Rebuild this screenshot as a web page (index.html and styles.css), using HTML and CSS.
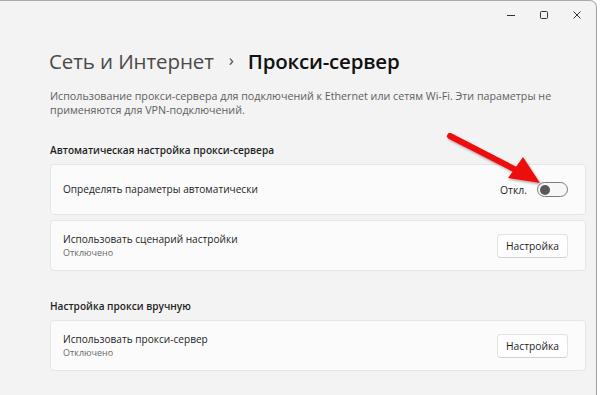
FILE: index.html
```html
<!DOCTYPE html>
<html lang="ru">
<head>
<meta charset="utf-8">
<link rel="stylesheet" href="styles.css">
</head>
<body>
<div class="window">
  <div class="titlebar">
    <span class="ctl">
      <svg width="10" height="10" viewBox="0 0 10 10"><path d="M1 5.5H9" stroke="#333" stroke-width="1"/></svg>
    </span>
    <span class="ctl">
      <svg width="10" height="10" viewBox="0 0 10 10"><rect x="1.5" y="1.5" width="7" height="7" rx="1" fill="none" stroke="#333" stroke-width="1"/></svg>
    </span>
    <span class="ctl">
      <svg width="10" height="10" viewBox="0 0 10 10"><path d="M1.5 1.5L8.5 8.5M8.5 1.5L1.5 8.5" stroke="#333" stroke-width="1"/></svg>
    </span>
  </div>
  <main class="content">
    <h1 class="crumbs"><span class="parent">Сеть и Интернет</span><span class="sep">›</span><span class="current">Прокси-сервер</span></h1>
    <p class="desc">Использование прокси-сервера для подключений к Ethernet или сетям Wi-Fi. Эти параметры не применяются для VPN-подключений.</p>

    <h2 class="section first">Автоматическая настройка прокси-сервера</h2>
    <div class="card">
      <div class="text"><div class="title">Определять параметры автоматически</div></div>
      <div class="state">Откл.</div>
      <div class="toggle"><span class="thumb"></span></div>
    </div>
    <div class="card">
      <div class="text"><div class="title">Использовать сценарий настройки</div><div class="sub">Отключено</div></div>
      <button class="btn">Настройка</button>
    </div>

    <h2 class="section">Настройка прокси вручную</h2>
    <div class="card">
      <div class="text"><div class="title">Использовать прокси-сервер</div><div class="sub">Отключено</div></div>
      <button class="btn">Настройка</button>
    </div>

    <h2 class="section faint">Связанные параметры</h2>
  </main>
  <svg class="arrow" width="120" height="80" viewBox="0 0 120 80">
    <defs>
      <filter id="sh" x="-20%" y="-20%" width="140%" height="140%">
        <feDropShadow dx="1" dy="1.5" stdDeviation="1" flood-color="#000" flood-opacity="0.35"/>
      </filter>
    </defs>
    <g filter="url(#sh)" fill="#ee1111">
      <path d="M10 15 L78 50" stroke="#ee1111" stroke-width="6" stroke-linecap="round"/>
      <polygon points="100,62 68,57 83,36"/>
    </g>
  </svg>
</div>
</body>
</html>
```
FILE: styles.css
```css
* { box-sizing: border-box; }
html, body { margin: 0; padding: 0; background: #ffffff; }
body {
  width: 600px;
  height: 395px;
  overflow: hidden;
  font-family: "Open Sans", "Noto Sans", sans-serif;
  color: #1b1b1b;
}
.window {
  position: relative;
  width: 597px;
  height: 395px;
  background: #f3f3f3;
  border-top: 1px solid #a9a9a9;
  border-right: 1px solid #a0a0a0;
  border-top-right-radius: 7px;
  overflow: hidden;
}
.titlebar {
  height: 28px;
  display: flex;
  justify-content: flex-end;
  align-items: center;
  padding-right: 3px;
}
.ctl {
  width: 33px;
  height: 28px;
  display: flex;
  align-items: center;
  justify-content: center;
}
.content {
  padding: 0 10px 0 50px;
}
.crumbs {
  margin: 17px 0 0 -1px;
  font-size: 20.5px;
  line-height: 28px;
  font-weight: 400;
  display: flex;
  align-items: center;
  letter-spacing: -0.1px;
}
.parent { color: #4a4a4a; }
.sep {
  color: #444;
  font-size: 17px;
  margin: 0 14px 2px 15px;
}
.current { color: #111; font-weight: 600; letter-spacing: -0.2px; }
.desc {
  margin: 14px 0 0;
  font-size: 10.7px;
  line-height: 13.5px;
  color: #606060;
  width: 520px;
}
.section {
  margin: 28px 0 7px;
  font-size: 10.1px;
  line-height: 14px;
  font-weight: 600;
  color: #1f1f1f;
}
.section.first { margin-top: 26px; }
.section.faint { margin-top: 23px; color: #c9c9c9; }
.card {
  display: flex;
  align-items: center;
  height: 51px;
  margin-bottom: 5px;
  padding: 0 17px 0 12px;
  background: #fbfbfb;
  border: 1px solid #e6e6e6;
  border-radius: 4px;
}
.card .text { flex: 1; }
.title {
  font-size: 10.1px;
  line-height: 13px;
  color: #1e1e1e;
}
.sub {
  font-size: 9px;
  line-height: 12px;
  color: #6a6a6a;
  margin-top: 1px;
}
.state {
  font-size: 10.4px;
  color: #1e1e1e;
  margin-right: 10px;
}
.toggle {
  width: 31px;
  height: 15px;
  border: 1px solid #7c7c7c;
  border-radius: 8px;
  background: #f7f7f7;
  display: flex;
  align-items: center;
  padding-left: 2px;
}
.thumb {
  width: 10px;
  height: 10px;
  border-radius: 50%;
  background: #585858;
}
.btn {
  width: 71px;
  height: 24px;
  font-family: inherit;
  font-size: 10.3px;
  color: #1e1e1e;
  background: #fefefe;
  border: 1px solid #e2e2e2;
  border-bottom-color: #d0d0d0;
  border-radius: 4px;
  padding: 0;
}
.arrow {
  position: absolute;
  left: 440px;
  top: 120px;
}
```
